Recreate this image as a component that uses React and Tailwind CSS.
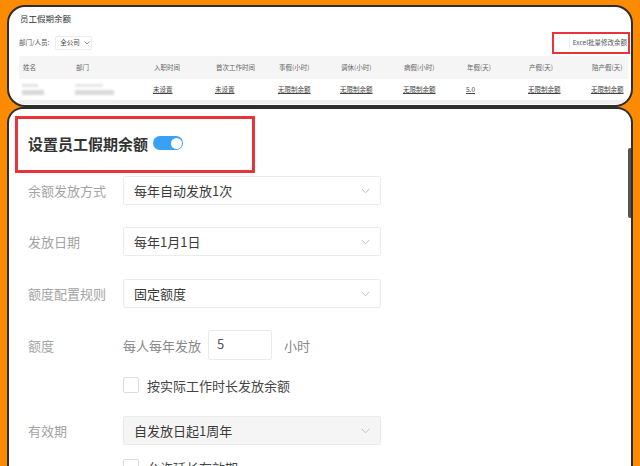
import React from "react";

const FONT = { fontFamily: '"Noto Sans CJK SC", "Noto Sans", sans-serif' };

function Chevron({ className = "" }) {
  return (
    <svg width="9" height="6" viewBox="0 0 9 6" className={className}>
      <path d="M0.7 0.8 L4.5 4.8 L8.3 0.8" fill="none" stroke="#c2c2c2" strokeWidth="1" />
    </svg>
  );
}

function Select({ text, disabled }) {
  return (
    <div
      className={`w-[258px] h-[29px] border border-[#ebebeb] rounded-[2px] flex items-center justify-between pl-[10px] pr-[10px] ${
        disabled ? "bg-[#f5f5f5]" : "bg-white"
      }`}
    >
      <span className="text-[13px] text-[#3a3a3a] leading-none">{text}</span>
      <Chevron />
    </div>
  );
}

function Row({ label, children, className = "" }) {
  return (
    <div className={`flex items-center ${className}`}>
      <div className="w-[95px] text-[13px] text-[#a3a3a3] leading-none">{label}</div>
      {children}
    </div>
  );
}

const cols = ["姓名", "部门", "入职时间", "首次工作时间", "事假(小时)", "调休(小时)", "病假(小时)", "年假(天)", "产假(天)", "陪产假(天)"];
const vals = ["未设置", "未设置", "无限制余额", "无限制余额", "无限制余额", "5.0", "无限制余额", "无限制余额"];

export default function App() {
  return (
    <div className="w-[640px] h-[466px] overflow-hidden bg-[#fd8b02] pt-[5px] px-[7px] flex flex-col" style={FONT}>
      {/* top card */}
      <div className="h-[102px] shrink-0 rounded-[18px] border-2 border-[#2e2e2e] bg-white overflow-hidden flex flex-col">
        <div className="h-[22px] flex items-center pl-[11px] text-[8.5px] text-[#333] leading-none">员工假期余额</div>
        <div className="h-[27px] flex items-center justify-between pl-[10px] pr-[1px]">
          <div className="flex items-center">
            <span className="text-[6.5px] text-[#555] leading-none">部门/人员:</span>
            <div className="ml-[6px] h-[14px] w-[37px] border border-[#ececec] rounded-[2px] flex items-center pl-[4px] gap-[4px]">
              <span className="text-[6.5px] text-[#444] leading-none">全公司</span>
              <svg width="6" height="4" viewBox="0 0 6 4">
                <path d="M0.5 0.5 L3 3 L5.5 0.5" fill="none" stroke="#777" strokeWidth="0.8" />
              </svg>
            </div>
          </div>
          <div className="w-[78px] h-[22px] border-2 border-[#e8333b] flex items-center justify-end">
            <div className="h-[14px] border-l border-[#f0f0f0] flex items-center pl-[3px] pr-[1px]">
              <span className="text-[6.5px] text-[#555] leading-none whitespace-nowrap">Excel批量修改余额</span>
            </div>
          </div>
        </div>
        <div className="ml-[10px] mr-[3px]">
          <div className="h-[23px] bg-[#f5f5f5] grid grid-cols-[53px_78px_62px_63px_62px_63px_63px_62px_63px_1fr] items-center pl-[4px]">
            {cols.map((c) => (
              <span key={c} className="text-[6.5px] text-[#666] leading-none whitespace-nowrap">{c}</span>
            ))}
          </div>
          <div className="h-[22px] grid grid-cols-[53px_78px_62px_63px_62px_63px_63px_62px_63px_1fr] items-center pl-[3px] border-b border-[#eee]">
            <div className="flex flex-col gap-[3px] blur-[1.2px]">
              <div className="w-[16px] h-[3px] bg-[#e3e3e3]" />
              <div className="w-[22px] h-[5px] bg-[#d8d8d8]" />
            </div>
            <div className="flex flex-col gap-[3px] blur-[1.2px]">
              <div className="w-[28px] h-[3px] bg-[#e6e6e6]" />
              <div className="w-[39px] h-[5px] bg-[#dadada]" />
            </div>
            {vals.map((v, i) => (
              <span key={i} className="text-[6.5px] text-[#444] underline leading-none whitespace-nowrap">{v}</span>
            ))}
          </div>
          <div className="h-[3px] bg-[#f0f0f0]" />
        </div>
      </div>

      {/* bottom card */}
      <div className="relative flex-1 rounded-t-[16px] border-2 border-b-0 border-[#2e2e2e] bg-white overflow-hidden">
        <div className="ml-[6px] mt-[7px] w-[240px] h-[57px] border-[3px] border-[#e8333b] pl-[10px] pt-[14px]">
          <div className="flex items-center h-[20px]">
            <span className="text-[15px] font-bold text-[#333] leading-none">设置员工假期余额</span>
            <div className="ml-[5px] w-[30px] h-[14px] rounded-full bg-[#38a1f3] flex items-center justify-end pr-[1.5px]">
              <div className="w-[11px] h-[11px] rounded-full bg-white" />
            </div>
          </div>
        </div>

        <div className="pl-[19px]">
          <Row label="余额发放方式" className="mt-[3px]">
            <Select text="每年自动发放1次" />
          </Row>
          <Row label="发放日期" className="mt-[22px]">
            <Select text="每年1月1日" />
          </Row>
          <Row label="额度配置规则" className="mt-[23px]">
            <Select text="固定额度" />
          </Row>
          <Row label="额度" className="mt-[22px]">
            <div className="flex items-center">
              <span className="text-[13px] text-[#888] leading-none">每人每年发放</span>
              <div className="ml-[7px] w-[64px] h-[30px] border border-[#ebebeb] rounded-[2px] flex items-start pt-[6px] pl-[8px]">
                <span className="text-[13px] text-[#555] leading-none">5</span>
              </div>
              <span className="ml-[12px] text-[13px] text-[#888] leading-none">小时</span>
            </div>
          </Row>
          <div className="mt-[17px] pl-[95px] flex items-center">
            <div className="w-[16px] h-[16px] border border-[#dcdcdc] rounded-[2px] bg-white" />
            <span className="ml-[8px] text-[13px] text-[#444] leading-none">按实际工作时长发放余额</span>
          </div>
          <Row label="有效期" className="mt-[23px]">
            <Select text="自发放日起1周年" disabled />
          </Row>
          <div className="mt-[14px] pl-[95px] flex items-center">
            <div className="w-[16px] h-[16px] border border-[#dcdcdc] rounded-[2px] bg-white" />
            <span className="ml-[8px] text-[13px] text-[#444] leading-none">允许延长有效期</span>
          </div>
        </div>

        <div className="absolute right-[-1px] top-[39px] w-[4px] h-[70px] rounded-full bg-[#555]" />
      </div>
    </div>
  );
}
